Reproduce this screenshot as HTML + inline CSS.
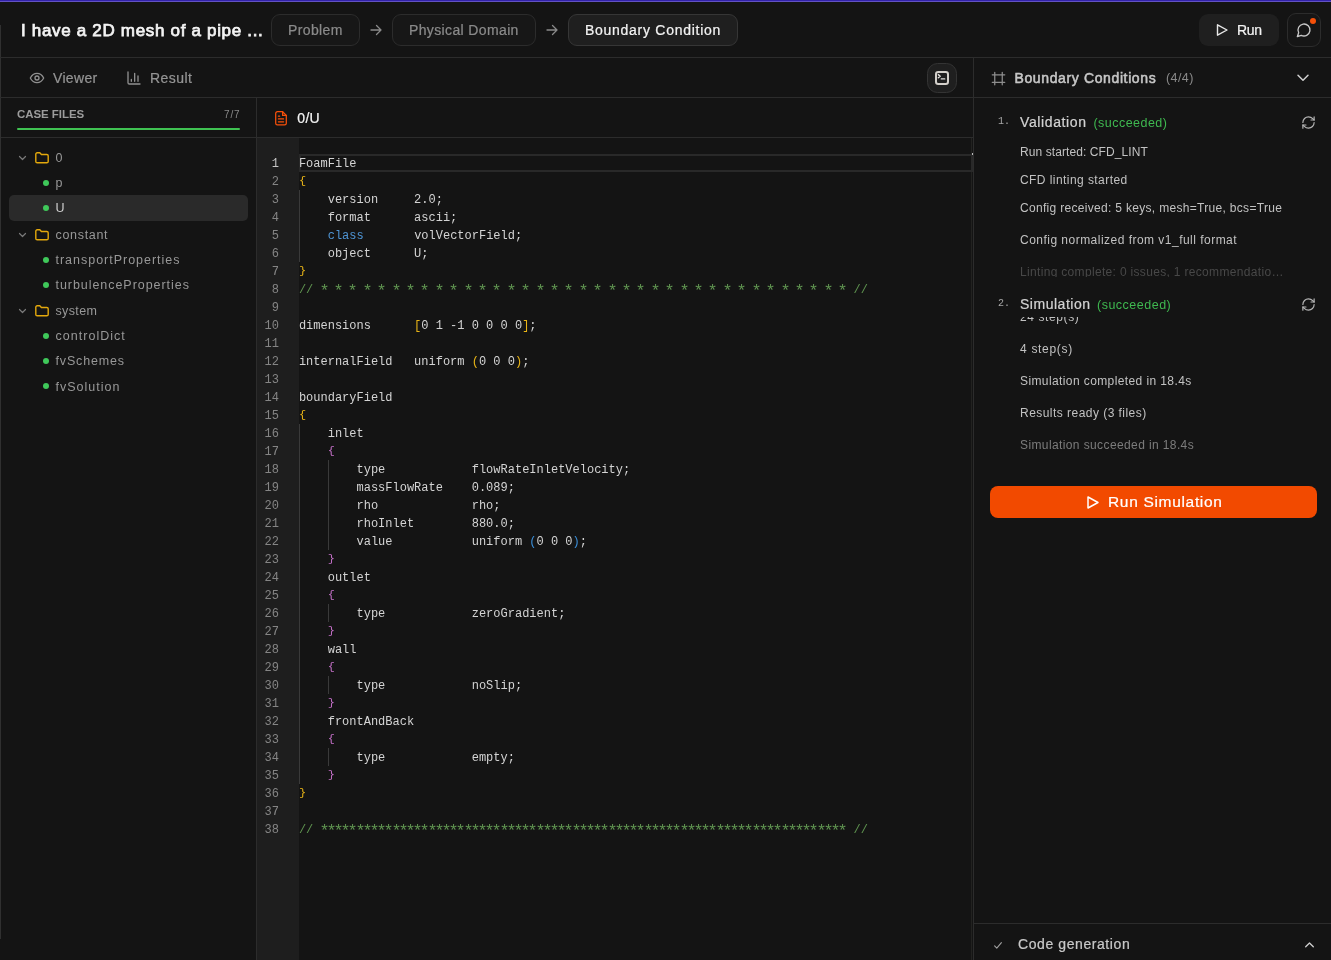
<!DOCTYPE html>
<html lang="en">
<head>
<meta charset="utf-8">
<title>Boundary Condition</title>
<style>
*{box-sizing:border-box;margin:0;padding:0}
html,body{width:1331px;height:960px;overflow:hidden;background:#141414;color:#e5e5e5;font-family:"Liberation Sans",sans-serif;}
body{position:relative}
#app{position:absolute;left:0;top:0;width:1331px;height:960px;will-change:transform;overflow:hidden}
.abs,.t{position:absolute}
.t{white-space:nowrap;line-height:1;display:block}
.topbar{left:0;top:0;width:1331px;height:2px;background:linear-gradient(#3222aa 0,#3222aa 1px,#6252c2 1px,#6252c2 2px)}
.hline{position:absolute;background:#2c2c2c;height:1px}
.vline{position:absolute;background:#2c2c2c;width:1px}
.pill{position:absolute;top:14px;height:32px;border:1px solid #2c2c2c;border-radius:9px;background:#171717}
.pill.active{background:#1f1f1f;border-color:#363636}
.m{-webkit-text-stroke:0.220px currentColor}
svg{display:block;overflow:visible;position:absolute}
.code{position:absolute;font-family:"Liberation Mono",monospace;font-size:12px;line-height:18px;white-space:pre;color:#d4d4d4}
.ln{position:absolute;font-family:"Liberation Mono",monospace;font-size:12px;line-height:18px;color:#858585;text-align:right;white-space:pre}
.y{color:#e8b417}.p{color:#c26fc6}.b{color:#4e94d4}.b3{color:#3b8fd9}.c{color:#5f9450}
.tree{color:#989898;font-size:12.500px}
.code b{display:inline-block;font-weight:normal;transform-origin:50% 20%;transform:scaleY(0.880)}
.c i{display:inline-block;font-style:normal;transform:translateY(2.200px) scale(1.400)}
.dot{position:absolute;width:6px;height:6px;border-radius:50%;background:#3fc85a}
.log{font-size:12px;color:#c2c2c2;left:1020px}
.guide{position:absolute;width:1px;background:#3a3a3a}
#title{letter-spacing:0.680px}
#pl1{letter-spacing:0.377px}
#pl2{letter-spacing:0.367px}
#pl3{letter-spacing:0.724px}
#run{letter-spacing:-0.344px}
#viewer{letter-spacing:0.331px}
#result{letter-spacing:0.463px}
#bc{letter-spacing:0.623px}
#bc44{letter-spacing:0.424px}
#cf{letter-spacing:-0.059px}
#c77{letter-spacing:0.847px}
#fname{letter-spacing:0.302px}
#tr3{letter-spacing:0.691px}
#tr4{letter-spacing:0.983px}
#tr5{letter-spacing:0.950px}
#tr6{letter-spacing:0.361px}
#tr7{letter-spacing:1.025px}
#tr8{letter-spacing:0.832px}
#tr9{letter-spacing:0.999px}
#val{letter-spacing:0.616px}
#suc1{letter-spacing:0.460px}
#lg0{letter-spacing:0.088px}
#lg1{letter-spacing:0.435px}
#lg2{letter-spacing:0.310px}
#lg3{letter-spacing:0.477px}
#lg4{letter-spacing:0.324px}
#sim{letter-spacing:0.514px}
#suc2{letter-spacing:0.500px}
#lg5{letter-spacing:0.605px}
#lg6{letter-spacing:0.689px}
#lg7{letter-spacing:0.397px}
#lg8{letter-spacing:0.462px}
#lg9{letter-spacing:0.390px}
#runsim{letter-spacing:0.676px}
#cg{letter-spacing:0.583px}
</style>
</head>
<body>
<div id="app">
<div class="abs topbar"></div>
<div class="vline" style="left:0;top:25px;height:914px;background:#303030"></div>
<div class="hline" style="left:0;top:57px;width:1331px"></div>
<div class="hline" style="left:0;top:97px;width:1331px"></div>

<!-- header -->
<span class="t" id="title" style="left:21px;top:22px;font-size:17px;-webkit-text-stroke:0.750px currentColor;color:#f4f4f4">I have a 2D mesh of a pipe ...</span>

<div class="pill" style="left:271px;width:89px"></div>
<span class="t m" id="pl1" style="top:23px;left:288px;font-size:14px;color:#8a8a8a">Problem</span>
<svg style="left:370px;top:24px" width="12" height="12" viewBox="0 0 12 12" fill="none" stroke="#8a8a8a" stroke-width="1.3" stroke-linecap="round" stroke-linejoin="round"><path d="M1 6h10M6.5 1.5L11 6l-4.500 4.500"/></svg>
<div class="pill" style="left:392px;width:144px"></div>
<span class="t m" id="pl2" style="top:23px;left:409px;font-size:14px;color:#8a8a8a">Physical Domain</span>
<svg style="left:546px;top:24px" width="12" height="12" viewBox="0 0 12 12" fill="none" stroke="#8a8a8a" stroke-width="1.3" stroke-linecap="round" stroke-linejoin="round"><path d="M1 6h10M6.500 1.500L11 6l-4.500 4.500"/></svg>
<div class="pill active" style="left:568px;width:170px"></div>
<span class="t m" id="pl3" style="top:23px;left:585px;font-size:14px;color:#f2f2f2">Boundary Condition</span>

<!-- run button -->
<div class="abs" style="left:1199px;top:14px;width:80px;height:32px;border-radius:9px;background:#1f1f1f"></div>
<svg style="left:1216px;top:24px" width="12" height="12" viewBox="0 0 12 12" fill="none" stroke="#e8e8e8" stroke-width="1.4" stroke-linejoin="round"><path d="M1.500 0.800L11 6 1.500 11.200z"/></svg>
<span class="t m" id="run" style="left:1237px;top:23px;font-size:14px;color:#f2f2f2">Run</span>
<div class="abs" style="left:1287px;top:13px;width:34px;height:34px;border-radius:9px;border:1px solid #2c2c2c;background:#161616"></div>
<svg style="left:1296px;top:22px" width="16" height="16" viewBox="0 0 24 24" fill="none" stroke="#c9c9c9" stroke-width="2" stroke-linecap="round" stroke-linejoin="round"><path d="M7.900 20A9 9 0 1 0 4 16.100L2 22z"/></svg>
<div class="abs" style="left:1310px;top:18px;width:6px;height:6px;border-radius:50%;background:#f5500a"></div>

<!-- tabs row -->
<svg style="left:29px;top:70px" width="16" height="16" viewBox="0 0 24 24" fill="none" stroke="#909090" stroke-width="2" stroke-linecap="round" stroke-linejoin="round"><path d="M2 12s3.500-7 10-7 10 7 10 7-3.500 7-10 7-10-7-10-7z"/><circle cx="12" cy="12" r="3"/></svg>
<span class="t m" id="viewer" style="left:53px;top:71.300px;font-size:14px;color:#949494">Viewer</span>
<svg style="left:126px;top:70px" width="16" height="16" viewBox="0 0 24 24" fill="none" stroke="#909090" stroke-width="2" stroke-linecap="round" stroke-linejoin="round"><path d="M3 3v16a2 2 0 0 0 2 2h16M18 17V9M13 17V5M8 17v-3"/></svg>
<span class="t m" id="result" style="left:150px;top:71.300px;font-size:14px;color:#949494">Result</span>

<div class="abs" style="left:927px;top:63px;width:30px;height:30px;border-radius:10.500px;border:1px solid #343434;background:#1f1f1f"></div>
<svg style="left:935px;top:71px" width="14" height="14" viewBox="0 0 14 14" fill="none" stroke="#d4d0cb" stroke-linecap="round" stroke-linejoin="round"><rect x="1" y="1" width="12" height="12" rx="2.200" stroke-width="2"/><path d="M3.300 3.600l1.900 1.600-1.900 1.600M6.300 7.900h3.400" stroke-width="1.400" stroke="#e4e2df"/></svg>

<!-- right header -->
<div class="vline" style="left:973px;top:58px;height:902px"></div>
<svg style="left:990.500px;top:70.500px" width="15" height="15" viewBox="0 0 24 24" fill="none" stroke="#8e8e8e" stroke-width="2" stroke-linecap="round"><path d="M22 6H2M22 18H2M6 2v20M18 2v20"/></svg>
<span class="t" id="bc" style="left:1014.500px;top:71px;font-size:14px;-webkit-text-stroke:0.550px currentColor;color:#c6c6c6">Boundary Conditions</span>
<span class="t" id="bc44" style="left:1166px;top:72px;font-size:12.5px;color:#8a8a8a">(4/4)</span>
<svg style="left:1297px;top:74px" width="12" height="8" viewBox="0 0 12 8" fill="none" stroke="#d0d0d0" stroke-width="1.500" stroke-linecap="round" stroke-linejoin="round"><path d="M1 1.200l5 5 5-5"/></svg>

<!-- sidebar -->
<div class="vline" style="left:256px;top:98px;height:862px"></div>
<span class="t" id="cf" style="left:17px;top:109px;font-size:11.500px;font-weight:bold;color:#9c9c9c">CASE FILES</span>
<span class="t" id="c77" style="left:224px;top:110px;font-size:10px;color:#8a8a8a">7/7</span>
<div class="abs" style="left:17px;top:128px;width:223px;height:2px;background:#3fc352;border-radius:1px"></div>
<div class="hline" style="left:1px;top:137px;width:972px"></div>

<div class="abs" style="left:9px;top:195px;width:239px;height:25.500px;border-radius:5px;background:#2a2a2a"></div>
<svg style="left:19px;top:155.8px" width="7" height="4" viewBox="0 0 7 4" fill="none" stroke="#7a7a7a" stroke-width="1.200" stroke-linecap="round" stroke-linejoin="round"><path d="M0.500 0.500l3 3 3-3"/></svg>
<svg style="left:35px;top:151.8px" width="14" height="11.500" preserveAspectRatio="none" viewBox="0 0 14 12" fill="none" stroke="#e3a80c" stroke-width="1.400" stroke-linejoin="round"><path d="M0.800 2.200a1.400 1.400 0 0 1 1.400-1.400h2.600l1.600 1.800h5.400a1.400 1.400 0 0 1 1.400 1.400v5.800a1.400 1.400 0 0 1-1.400 1.400H2.200a1.400 1.400 0 0 1-1.400-1.400z"/></svg>
<span class="t tree" id="tr0" style="left:55.500px;top:152.2px;color:#989898">0</span>
<div class="dot" style="left:43px;top:179.9px"></div>
<span class="t tree" id="tr1" style="left:55.500px;top:177.3px;color:#989898">p</span>
<div class="dot" style="left:43px;top:205.0px"></div>
<span class="t tree" id="tr2" style="left:55.500px;top:202.4px;color:#cfcfcf">U</span>
<svg style="left:19px;top:232.8px" width="7" height="4" viewBox="0 0 7 4" fill="none" stroke="#7a7a7a" stroke-width="1.200" stroke-linecap="round" stroke-linejoin="round"><path d="M0.500 0.500l3 3 3-3"/></svg>
<svg style="left:35px;top:228.8px" width="14" height="11.500" preserveAspectRatio="none" viewBox="0 0 14 12" fill="none" stroke="#e3a80c" stroke-width="1.400" stroke-linejoin="round"><path d="M0.800 2.200a1.400 1.400 0 0 1 1.400-1.400h2.600l1.600 1.800h5.400a1.400 1.400 0 0 1 1.400 1.400v5.800a1.400 1.400 0 0 1-1.400 1.400H2.200a1.400 1.400 0 0 1-1.400-1.400z"/></svg>
<span class="t tree" id="tr3" style="left:55.500px;top:229.2px;color:#989898">constant</span>
<div class="dot" style="left:43px;top:256.6px"></div>
<span class="t tree" id="tr4" style="left:55.500px;top:254.0px;color:#989898">transportProperties</span>
<div class="dot" style="left:43px;top:281.7px"></div>
<span class="t tree" id="tr5" style="left:55.500px;top:279.1px;color:#989898">turbulenceProperties</span>
<svg style="left:19px;top:309.0px" width="7" height="4" viewBox="0 0 7 4" fill="none" stroke="#7a7a7a" stroke-width="1.200" stroke-linecap="round" stroke-linejoin="round"><path d="M0.500 0.500l3 3 3-3"/></svg>
<svg style="left:35px;top:305.0px" width="14" height="11.500" preserveAspectRatio="none" viewBox="0 0 14 12" fill="none" stroke="#e3a80c" stroke-width="1.400" stroke-linejoin="round"><path d="M0.800 2.200a1.400 1.400 0 0 1 1.400-1.400h2.600l1.600 1.800h5.400a1.400 1.400 0 0 1 1.400 1.400v5.800a1.400 1.400 0 0 1-1.400 1.400H2.200a1.400 1.400 0 0 1-1.400-1.400z"/></svg>
<span class="t tree" id="tr6" style="left:55.500px;top:305.4px;color:#989898">system</span>
<div class="dot" style="left:43px;top:332.9px"></div>
<span class="t tree" id="tr7" style="left:55.500px;top:330.3px;color:#989898">controlDict</span>
<div class="dot" style="left:43px;top:358.0px"></div>
<span class="t tree" id="tr8" style="left:55.500px;top:355.4px;color:#989898">fvSchemes</span>
<div class="dot" style="left:43px;top:383.2px"></div>
<span class="t tree" id="tr9" style="left:55.500px;top:380.6px;color:#989898">fvSolution</span>

<!-- file header -->
<svg style="left:275px;top:110.600px" width="12" height="14.600" viewBox="0 0 12 14.600" fill="none" stroke="#f8500a" stroke-width="1.250" stroke-linecap="round" stroke-linejoin="round"><path d="M7.600 0.700H2.400a1.700 1.700 0 0 0-1.700 1.700v9.800a1.700 1.700 0 0 0 1.700 1.700h7.200a1.700 1.700 0 0 0 1.700-1.700V4.400z"/><path d="M7.600 0.700v3.700h3.700M3.400 8h5.200M3.400 10.800h5.200M3.400 5.200h1.200"/></svg>
<span class="t m" id="fname" style="left:297.300px;top:111.350px;font-size:14px;color:#f4f4f4">0/U</span>

<!-- editor -->
<div class="abs" style="left:257px;top:138px;width:42px;height:822px;background:#1e1e1e"></div>
<div class="vline" style="left:971px;top:138px;height:822px;background:#222220"></div>
<div class="abs" style="left:299px;top:154px;width:674px;height:18px;border:2px solid #292929"></div>
<div class="abs" style="left:972px;top:153px;width:1px;height:2px;background:#bdbdbd"></div>
<div class="guide" style="left:299px;top:190px;height:72px"></div>
<div class="guide" style="left:299px;top:424px;height:360px"></div>
<div class="guide" style="left:328px;top:460px;height:90px"></div>
<div class="guide" style="left:328px;top:604px;height:18px"></div>
<div class="guide" style="left:328px;top:676px;height:18px"></div>
<div class="guide" style="left:328px;top:748px;height:18px"></div>
<div class="ln" style="left:257px;top:154.600px;width:22px"><span style="color:#c6c6c6">1</span>
2
3
4
5
6
7
8
9
10
11
12
13
14
15
16
17
18
19
20
21
22
23
24
25
26
27
28
29
30
31
32
33
34
35
36
37
38</div>
<div class="code" id="code" style="left:298.900px;top:154.600px">FoamFile
<span class="y"><b>{</b></span>
    version     2.0;
    format      ascii;
    <span class="b">class</span>       volVectorField;
    object      U;
<span class="y"><b>}</b></span>
<span class="c">// <i>*</i> <i>*</i> <i>*</i> <i>*</i> <i>*</i> <i>*</i> <i>*</i> <i>*</i> <i>*</i> <i>*</i> <i>*</i> <i>*</i> <i>*</i> <i>*</i> <i>*</i> <i>*</i> <i>*</i> <i>*</i> <i>*</i> <i>*</i> <i>*</i> <i>*</i> <i>*</i> <i>*</i> <i>*</i> <i>*</i> <i>*</i> <i>*</i> <i>*</i> <i>*</i> <i>*</i> <i>*</i> <i>*</i> <i>*</i> <i>*</i> <i>*</i> <i>*</i> //</span>

dimensions      <span class="y">[</span>0 1 -1 0 0 0 0<span class="y">]</span>;

internalField   uniform <span class="y">(</span>0 0 0<span class="y">)</span>;

boundaryField
<span class="y"><b>{</b></span>
    inlet
    <span class="p"><b>{</b></span>
        type            flowRateInletVelocity;
        massFlowRate    0.089;
        rho             rho;
        rhoInlet        880.0;
        value           uniform <span class="b3">(</span>0 0 0<span class="b3">)</span>;
    <span class="p"><b>}</b></span>
    outlet
    <span class="p"><b>{</b></span>
        type            zeroGradient;
    <span class="p"><b>}</b></span>
    wall
    <span class="p"><b>{</b></span>
        type            noSlip;
    <span class="p"><b>}</b></span>
    frontAndBack
    <span class="p"><b>{</b></span>
        type            empty;
    <span class="p"><b>}</b></span>
<span class="y"><b>}</b></span>

<span class="c">// <i>*</i><i>*</i><i>*</i><i>*</i><i>*</i><i>*</i><i>*</i><i>*</i><i>*</i><i>*</i><i>*</i><i>*</i><i>*</i><i>*</i><i>*</i><i>*</i><i>*</i><i>*</i><i>*</i><i>*</i><i>*</i><i>*</i><i>*</i><i>*</i><i>*</i><i>*</i><i>*</i><i>*</i><i>*</i><i>*</i><i>*</i><i>*</i><i>*</i><i>*</i><i>*</i><i>*</i><i>*</i><i>*</i><i>*</i><i>*</i><i>*</i><i>*</i><i>*</i><i>*</i><i>*</i><i>*</i><i>*</i><i>*</i><i>*</i><i>*</i><i>*</i><i>*</i><i>*</i><i>*</i><i>*</i><i>*</i><i>*</i><i>*</i><i>*</i><i>*</i><i>*</i><i>*</i><i>*</i><i>*</i><i>*</i><i>*</i><i>*</i><i>*</i><i>*</i><i>*</i><i>*</i><i>*</i><i>*</i> //</span></div>

<!-- right panel -->
<span class="t" id="n1" style="left:998px;top:117px;font-size:10px;font-family:'Liberation Mono',monospace;color:#a8a8a8">1.</span>
<span class="t m" id="val" style="left:1020px;top:115px;font-size:14px;color:#d2d2d2">Validation</span>
<span class="t" id="suc1" style="left:1093.500px;top:117.300px;font-size:12.500px;color:#3fb950">(succeeded)</span>
<svg style="left:1300.6px;top:114.5px" width="15" height="15" viewBox="0 0 24 24" fill="none" stroke="#b4b4b4" stroke-width="1.900" stroke-linecap="round" stroke-linejoin="round"><path d="M3 12a9 9 0 0 1 9-9 9.750 9.750 0 0 1 6.740 2.740L21 8"/><path d="M21 3v5h-5"/><path d="M21 12a9 9 0 0 1-9 9 9.750 9.750 0 0 1-6.740-2.740L3 16"/><path d="M8 16H3v5"/></svg>
<span class="t log" id="lg0" style="top:145.7px">Run started: CFD_LINT</span>
<span class="t log" id="lg1" style="top:173.9px">CFD linting started</span>
<span class="t log" id="lg2" style="top:202.1px">Config received: 5 keys, mesh=True, bcs=True</span>
<span class="t log" id="lg3" style="top:234.1px">Config normalized from v1_full format</span>
<div class="abs" style="left:1020px;top:262px;width:290px;height:15px;overflow:hidden"><span class="t log" id="lg4" style="left:0;top:3.6px;color:#484848">Linting complete: 0 issues, 1 recommendatio…</span></div>
<span class="t" id="n2" style="left:998px;top:299px;font-size:10px;font-family:'Liberation Mono',monospace;color:#a8a8a8">2.</span>
<span class="t m" id="sim" style="left:1020px;top:297px;font-size:14px;color:#d2d2d2">Simulation</span>
<span class="t" id="suc2" style="left:1097px;top:299.300px;font-size:12.500px;color:#3fb950">(succeeded)</span>
<svg style="left:1300.6px;top:296.6px" width="15" height="15" viewBox="0 0 24 24" fill="none" stroke="#b4b4b4" stroke-width="1.900" stroke-linecap="round" stroke-linejoin="round"><path d="M3 12a9 9 0 0 1 9-9 9.750 9.750 0 0 1 6.740 2.740L21 8"/><path d="M21 3v5h-5"/><path d="M21 12a9 9 0 0 1-9 9 9.750 9.750 0 0 1-6.740-2.740L3 16"/><path d="M8 16H3v5"/></svg>
<div class="abs" style="left:1020px;top:317px;width:290px;height:10px;overflow:hidden"><span class="t log" id="lg5" style="left:0;top:-5.7px">24 step(s)</span></div>
<span class="t log" id="lg6" style="top:343.3px;color:#c2c2c2">4 step(s)</span>
<span class="t log" id="lg7" style="top:375.3px;color:#c2c2c2">Simulation completed in 18.4s</span>
<span class="t log" id="lg8" style="top:407.2px;color:#c2c2c2">Results ready (3 files)</span>
<span class="t log" id="lg9" style="top:439.1px;color:#7c7c7c">Simulation succeeded in 18.4s</span>
<div class="abs" style="left:990px;top:486px;width:327px;height:32px;border-radius:8px;background:#f24a00"></div>
<svg style="left:1087px;top:495.500px" width="12" height="13" viewBox="0 0 12 13" fill="none" stroke="#fff" stroke-width="1.500" stroke-linejoin="round"><path d="M1 1l10 5.500-10 5.500z"/></svg>
<span class="t m" id="runsim" style="left:1108px;top:493.700px;font-size:15.500px;color:#fff">Run Simulation</span>
<div class="hline" style="left:974px;top:923px;width:357px"></div>
<svg style="left:994px;top:941.500px" width="8" height="7" viewBox="0 0 8 7" fill="none" stroke="#a0a0a0" stroke-width="1.100" stroke-linecap="round" stroke-linejoin="round"><path d="M0.600 3.800l2.200 2.400 4.600-5.600"/></svg>
<span class="t m" id="cg" style="left:1018px;top:937px;font-size:14px;color:#c8c8c8">Code generation</span>
<svg style="left:1305px;top:941.500px" width="9" height="5.500" viewBox="0 0 9 5.500" fill="none" stroke="#d0d0d0" stroke-width="1.300" stroke-linecap="round" stroke-linejoin="round"><path d="M0.700 4.800l3.800-3.800 3.800 3.800"/></svg>
</div>
</body>
</html>
